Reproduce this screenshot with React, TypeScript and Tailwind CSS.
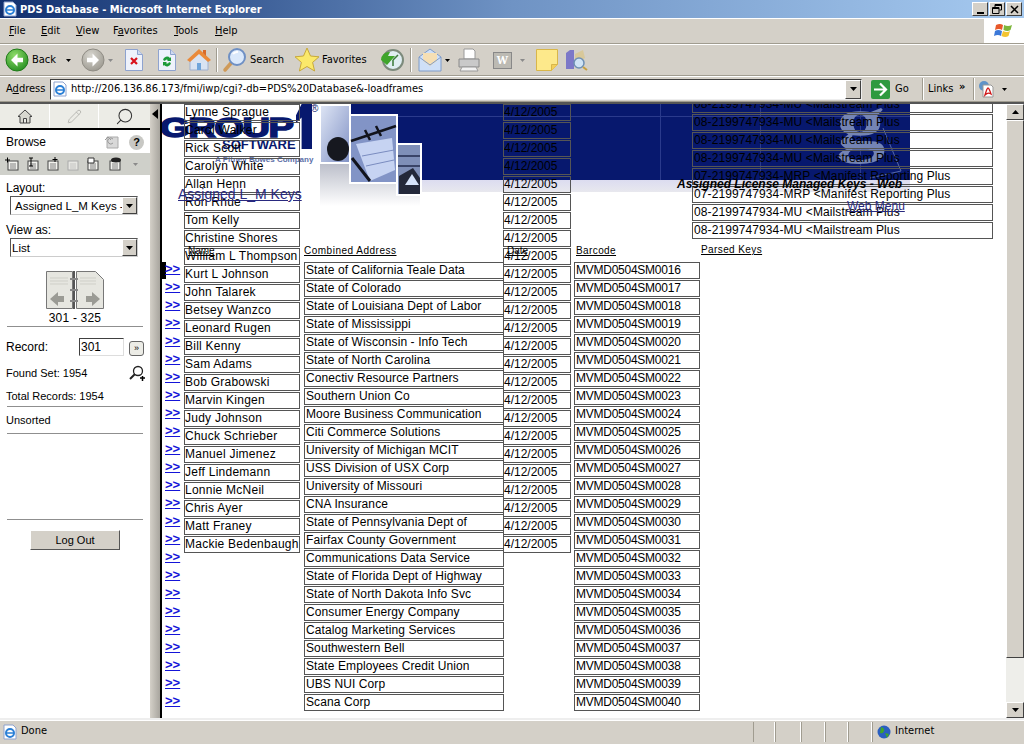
import type { ReactNode } from 'react';
import { Search, Pencil } from 'lucide-react';

const NAMES = [
  'Lynne Sprague', 'Carol Walker', 'Rick Scott', 'Carolyn White', 'Allan Henn', 'Ron Rhue', 'Tom Kelly',
  'Christine Shores', 'William L Thompson', 'Kurt L Johnson', 'John Talarek', 'Betsey Wanzco', 'Leonard Rugen',
  'Bill Kenny', 'Sam Adams', 'Bob Grabowski', 'Marvin Kingen', 'Judy Johnson', 'Chuck Schrieber', 'Manuel Jimenez',
  'Jeff Lindemann', 'Lonnie McNeil', 'Chris Ayer', 'Matt Franey', 'Mackie Bedenbaugh',
];

const ADDRESSES = [
  'State of California Teale Data', 'State of Colorado', 'State of Louisiana Dept of Labor', 'State of Mississippi',
  'State of Wisconsin - Info Tech', 'State of North Carolina', 'Conectiv Resource Partners', 'Southern Union Co',
  'Moore Business Communication', 'Citi Commerce Solutions', 'University of Michigan MCIT', 'USS Division of USX Corp',
  'University of Missouri', 'CNA Insurance', 'State of Pennsylvania Dept of', 'Fairfax County Government',
  'Communications Data Service', 'State of Florida Dept of Highway', 'State of North Dakota Info Svc',
  'Consumer Energy Company', 'Catalog Marketing Services', 'Southwestern Bell', 'State Employees Credit Union',
  'UBS NUI Corp', 'Scana Corp',
];

const KEYS = [
  '08-2199747934-MU <Mailstream Plus', '08-2199747934-MU <Mailstream Plus', '08-2199747934-MU <Mailstream Plus',
  '08-2199747934-MU <Mailstream Plus', '07-2199747934-MRP <Manifest Reporting Plus',
  '07-2199747934-MRP <Manifest Reporting Plus', '08-2199747934-MU <Mailstream Plus', '08-2199747934-MU <Mailstream Plus',
];

const BARCODES = Array.from({ length: 25 }, (_, i) => `MVMD0504SM00${16 + i}`);
const DATES = Array.from({ length: 25 }, () => '4/12/2005');

function Cell({ children, spacing = 'tracking-[0.1px] px-px' }: { children: ReactNode; spacing?: string }) {
  return (
    <div className={`mb-px h-[17px] overflow-hidden whitespace-nowrap border border-[#555] text-[12px] leading-[15px] text-black ${spacing}`}>
      {children}
    </div>
  );
}

function MenuItem({ k, rest }: { k: string; rest: string }) {
  return (
    <span>
      <span className="underline">{k}</span>
      {rest}
    </span>
  );
}

function Sep() {
  return <div className="mx-[3px] h-[24px] w-[2px] border-x border-l-[#a09c90] border-r-white" />;
}

function Arrow({ color = '#000' }: { color?: string }) {
  return (
    <svg width="5" height="3" viewBox="0 0 5 3" className="mx-[3px]">
      <path d="M0 0h5L2.500 3z" fill={color} />
    </svg>
  );
}

function RoundArrow({ back, gray }: { back?: boolean; gray?: boolean }) {
  const id = gray ? 'fwd' : 'bck';
  return (
    <svg width="24" height="24" viewBox="0 0 24 24">
      <defs>
        <radialGradient id={id} cx="0.4" cy="0.3" r="0.8">
          <stop offset="0" stopColor={gray ? '#d8d6cf' : '#8fdc6a'} />
          <stop offset="1" stopColor={gray ? '#98958c' : '#1f8a1c'} />
        </radialGradient>
      </defs>
      <circle cx="12" cy="12" r="11" fill={`url(#${id})`} stroke={gray ? '#8f8c84' : '#1f7a18'} />
      <path
        d={back ? 'M12.500 5.500 6 12l6.500 6.500v-4.200H18V9.700h-5.500z' : 'M11.500 5.500 18 12l-6.500 6.500v-4.200H6V9.700h5.500z'}
        fill="#fff"
      />
    </svg>
  );
}

function PageIcon({ children }: { children: ReactNode }) {
  return (
    <svg width="20" height="24" viewBox="0 0 20 24" className="mx-[3px]">
      <path d="M1.500 1.500h12l5 5v16h-17z" fill="#eef2fb" stroke="#8ea3cf" />
      <path d="M13.500 1.500v5h5" fill="#cfd9ef" stroke="#8ea3cf" />
      {children}
    </svg>
  );
}

function IeIcon({ size = 16 }: { size?: number }) {
  return (
    <svg width={size} height={size} viewBox="0 0 16 16">
      <path d="M2 1h9l3 3v11H2z" fill="#fff" stroke="#8ea3cf" />
      <circle cx="8" cy="9" r="4" fill="none" stroke="#2a7fd6" strokeWidth="2" />
      <path d="M4 9h8" stroke="#2a7fd6" strokeWidth="1.500" />
    </svg>
  );
}

function TitleBar() {
  return (
    <div className="flex h-[18px] items-center bg-gradient-to-r from-[#12306f] via-[#6f93c4] to-[#a6caf0] pl-[2px] pr-[2px]">
      <IeIcon />
      <span className="ml-[2px] flex-1 font-['DejaVu_Sans_Condensed','Noto_Sans',sans-serif] text-[11px] font-bold leading-none text-white">
        PDS Database - Microsoft Internet Explorer
      </span>
      <div className="flex gap-[1px]">
        {[0, 1, 2].map(i => (
          <div
            key={i}
            className="flex h-[14px] w-[16px] items-center justify-center border border-t-white border-l-white border-r-[#404040] border-b-[#404040] bg-[#d4d0c8]"
          >
            {i === 1 ? (
              <svg width="10" height="10" viewBox="0 0 10 10">
                <path d="M3 .5h6.500V6H7.500M3 .5V3M3 1.500h6.500" fill="none" stroke="#000" />
                <path d="M.5 3.500h6.500v6H.5zM.5 4.500h6.500" fill="none" stroke="#000" />
              </svg>
            ) : i === 0 ? (
              <div className="mt-[8px] h-[2px] w-[7px] bg-black" />
            ) : (
              <svg width="9" height="9" viewBox="0 0 9 9">
                <path d="M1 1l7 7M8 1 1 8" stroke="#000" strokeWidth="1.500" />
              </svg>
            )}
          </div>
        ))}
      </div>
    </div>
  );
}

function MenuBar() {
  return (
    <div className="flex h-[26px] items-center justify-between border-y border-t-white border-b-[#a09c90] font-['DejaVu_Sans_Condensed','Noto_Sans',sans-serif] text-[11px]">
      <div className="flex pl-[9px]">
        <span className="w-[32px]"><MenuItem k="F" rest="ile" /></span>
        <span className="w-[35px]"><MenuItem k="E" rest="dit" /></span>
        <span className="w-[37px]"><MenuItem k="V" rest="iew" /></span>
        <span className="w-[61px]">F<span className="underline">a</span>vorites</span>
        <span className="w-[41px]"><MenuItem k="T" rest="ools" /></span>
        <MenuItem k="H" rest="elp" />
      </div>
      <div className="flex h-full w-[40px] items-center justify-center bg-white">
        <svg width="20" height="18" viewBox="0 0 20 18">
          <path d="M2 3q4-2 7 0l-1 5q-3-2-7 0z" fill="#e8582a" />
          <path d="M10 3q4 2 8 0l-1.500 5q-3 2-7 0z" fill="#7db63a" />
          <path d="M1 9q3-2 7 0l-1 5q-3-2-7 0z" fill="#3b78d8" />
          <path d="M9 9q4 2 7 0l-1.500 5q-3 2-7 0z" fill="#f4c430" />
        </svg>
      </div>
    </div>
  );
}

function Toolbar() {
  return (
    <div className="flex h-[32px] items-center whitespace-nowrap border-y border-t-white border-b-[#a09c90] pl-[5px] font-['DejaVu_Sans_Condensed','Noto_Sans',sans-serif] text-[11px]">
      <RoundArrow back />
      <span className="ml-[3px] w-[31px]">Back</span>
      <Arrow />
      <span className="ml-[7px] flex"><RoundArrow gray /></span>
      <span className="flex"><Arrow color="#8a8a8a" /></span>
      <span className="ml-[5px] flex">
        <PageIcon>
          <path d="M7 10l6 6M13 10l-6 6" stroke="#d8121c" strokeWidth="2.200" />
        </PageIcon>
      </span>
      <span className="ml-[7px] flex">
        <PageIcon>
          <path d="M6 12a4 4 0 0 1 7-2l1-1v4h-4l1-1a2 2 0 0 0-3 1zM14 15a4 4 0 0 1-7 2l-1 1v-4h4l-1 1a2 2 0 0 0 3-1z" fill="#1d9a38" />
        </PageIcon>
      </span>
      <svg width="24" height="24" viewBox="0 0 24 24" className="ml-[7px]">
        <path d="M12 3 3 12v10h18V12z" fill="#d9e3f2" stroke="#9fb0cf" />
        <path d="M12 1 0 12l3 2 9-8 9 8 3-2z" fill="#ea8a3a" />
        <path d="M10 15h4v7h-4z" fill="#6fa4da" />
        <path d="M16 2h3v6l-3-3z" fill="#d96a2a" />
      </svg>
      <span className="ml-[2px] flex"><Sep /></span>
      <svg width="26" height="26" viewBox="0 0 26 26" className="ml-[1px]">
        <path d="M10 15 3 23" stroke="#cf9a58" strokeWidth="3.500" strokeLinecap="round" />
        <circle cx="15" cy="10" r="8" fill="#dbe9fb" stroke="#6f90c4" strokeWidth="2" />
        <path d="M11 7a5 5 0 0 1 5-2" stroke="#fff" strokeWidth="2" fill="none" />
      </svg>
      <span className="ml-[2px] w-[34px]">Search</span>
      <svg width="26" height="26" viewBox="0 0 26 26" className="ml-[10px]">
        <path d="M13 1l3.500 8 8.500.8-6.400 5.600 2 8.600L13 19.500 5.400 24l2-8.600L1 9.800 9.500 9z" fill="#fbe96a" stroke="#c8a93a" />
      </svg>
      <span className="ml-[2px] w-[46px]">Favorites</span>
      <svg width="24" height="24" viewBox="0 0 24 24" className="ml-[12px]">
        <circle cx="13" cy="12" r="10" fill="#dfeef2" stroke="#7c8a7c" strokeWidth="2" />
        <path d="M13 12l5-5M13 12v6" stroke="#3a7a3a" strokeWidth="1.500" />
        <path d="M1 12a8 8 0 0 1 9-8l-2 4h7l-8 9z" fill="#3fa52c" />
      </svg>
      <span className="ml-[3px] flex"><Sep /></span>
      <svg width="24" height="24" viewBox="0 0 24 24" className="ml-[3px]">
        <path d="M1 9 12 1l11 8v14H1z" fill="#cfe0f8" stroke="#7f9cc9" />
        <path d="M5 5h14v8l-7 5-7-5z" fill="#f6dfb4" />
        <path d="M1 9l11 8 11-8" fill="none" stroke="#7f9cc9" />
      </svg>
      <Arrow />
      <svg width="24" height="24" viewBox="0 0 24 24" className="ml-[4px]">
        <path d="M7 1h9l2 2v8H7z" fill="#fff" stroke="#9a9a9a" />
        <path d="M2 11h20v8H2z" fill="#c9c9c9" stroke="#8a8a8a" />
        <path d="M5 19h14l2 4H3z" fill="#f2f2f2" stroke="#9a9a9a" />
      </svg>
      <div className="ml-[12px] flex h-[17px] w-[19px] items-center justify-center border border-[#888] bg-[#bcbab3] font-serif text-[12px] font-bold leading-none text-white">
        W
      </div>
      <span className="ml-[5px] flex"><Arrow color="#8a8a8a" /></span>
      <svg width="24" height="24" viewBox="0 0 24 24" className="ml-[7px]">
        <path d="M1.500 1.500h21v15l-6 6h-15z" fill="#fde98b" stroke="#d8b64a" />
        <path d="M16.500 22.500v-6h6" fill="#f4cf5a" stroke="#d8b64a" />
      </svg>
      <svg width="24" height="24" viewBox="0 0 24 24" className="ml-[6px]">
        <path d="M1 5l4-3h4v19H1z" fill="#7c78c8" />
        <path d="M10 6l8-4 2 8-10 6z" fill="#d8c89a" />
        <circle cx="14" cy="15" r="5" fill="#cfe3f5" stroke="#6f90b4" strokeWidth="1.500" />
        <path d="M18 19l4 3" stroke="#c8a040" strokeWidth="2" />
      </svg>
    </div>
  );
}

function AddressBar() {
  return (
    <div className="flex h-[26px] items-center whitespace-nowrap border-y border-t-white border-b-[#a09c90] font-['DejaVu_Sans_Condensed','Noto_Sans',sans-serif] text-[11px]">
      <span className="ml-[6px] w-[44px]">A<span className="underline">d</span>dress</span>
      <div className="flex h-[21px] w-[812px] items-center border border-t-[#404040] border-l-[#404040] border-r-[#eee] border-b-[#eee] bg-white">
        <span className="ml-[1px] flex"><IeIcon /></span>
        <span className="ml-[3px] flex-1 text-black">http://206.136.86.173/fmi/iwp/cgi?-db=PDS%20Database&amp;-loadframes</span>
        <div className="flex h-[19px] w-[16px] items-center justify-center border border-t-white border-l-white border-r-[#404040] border-b-[#404040] bg-[#d4d0c8]">
          <svg width="7" height="4" viewBox="0 0 7 4"><path d="M0 0h7L3.500 4z" /></svg>
        </div>
      </div>
      <svg width="19" height="19" viewBox="0 0 19 19" className="ml-[9px]">
        <rect width="19" height="19" rx="2" fill="#2f9a3f" />
        <path d="M9 3.500 15 9.500 9 15.500M3 9.500h11" fill="none" stroke="#fff" strokeWidth="2.200" />
      </svg>
      <span className="ml-[5px] w-[27px]">Go</span>
      <div className="h-[22px] w-[2px] border-x border-l-[#a09c90] border-r-white" />
      <span className="ml-[4px] w-[31px]">Links</span>
      <span className="mb-[5px] w-[14px] text-[11px] font-bold leading-none">»</span>
      <div className="h-[22px] w-[2px] border-x border-l-[#a09c90] border-r-white" />
      <svg width="17" height="18" viewBox="0 0 17 18" className="ml-[3px]">
        <circle cx="6" cy="6" r="5" fill="#5f93c8" />
        <path d="M5 5h8l2 2v10H5z" fill="#fff" stroke="#999" />
        <path d="M7 15q2-7 3-7t3 6q-3-2-6 1z" fill="none" stroke="#d01818" strokeWidth="1.300" />
      </svg>
      <span className="ml-[4px] flex"><Arrow /></span>
    </div>
  );
}

function Divider() {
  return <div className="mx-[7px] h-px bg-[#8f8f8f]" />;
}

function Select({ value, narrow }: { value: string; narrow?: boolean }) {
  return (
    <div className="ml-[10px] flex h-[19px] w-[128px] items-center border border-t-[#555] border-l-[#555] border-r-[#ccc] border-b-[#ccc] bg-white">
      <span className={`flex-1 overflow-hidden whitespace-nowrap text-[11.5px] leading-[16px] ${narrow ? 'pl-[1px]' : 'pl-[4px]'}`}>{value}</span>
      <div className="flex h-[17px] w-[15px] shrink-0 items-center justify-center border border-t-white border-l-white border-r-[#404040] border-b-[#404040] bg-[#d4d0c8]">
        <svg width="7" height="4" viewBox="0 0 7 4"><path d="M0 0h7L3.500 4z" /></svg>
      </div>
    </div>
  );
}

function Sidebar() {
  return (
    <div className="flex w-[150px] shrink-0 flex-col bg-white text-[12px] text-black">
      <div className="flex h-[26px] shrink-0 border-b-[2px] border-b-black bg-[#ecece6]">
        <div className="flex w-[50px] items-center justify-center border-r border-r-white">
          <svg width="16" height="15" viewBox="0 0 16 15">
            <path d="M8 1 1 7.500h2V14h10V7.500h2zM6.500 14V9.500h3V14" fill="#d8d8d0" stroke="#444" />
          </svg>
        </div>
        <div className="flex w-[49px] items-center justify-center border-r border-r-white text-[#b5b5b0]">
          <Pencil size={15} strokeWidth={1.500} />
        </div>
        <div className="flex flex-1 items-center justify-center text-[#333]">
          <Search size={19} strokeWidth={1.300} className="-scale-x-100" />
        </div>
      </div>
      <div className="flex h-[23px] shrink-0 items-center pl-[6px] pt-[1px]">
        <span className="flex-1">Browse</span>
        <svg width="17" height="15" viewBox="0 0 17 15" className="mr-[8px]">
          <path d="M3 2h11v11H3z" fill="#d8d8d8" stroke="#aaa" />
          <path d="M1 5l3-3 3 3M9 8a3 3 0 1 1 0-4" fill="none" stroke="#999" />
        </svg>
        <div className="mr-[6px] flex h-[15px] w-[15px] items-center justify-center rounded-full bg-[#c8c8c4] text-[11px] font-bold leading-none">?</div>
      </div>
      <div className="flex h-[22px] shrink-0 items-center gap-[5px] bg-[#cfd0ca] pl-[5px]">
        {[0, 1, 2, 3, 4, 5].map(i => (
          <svg key={i} width={i === 5 ? 19 : 15} height="15" viewBox="0 0 15 15">
            <rect x="3" y="4" width="10" height="9" fill={i === 3 ? '#e6e6e2' : '#f2f2ee'} stroke={i === 3 ? '#aaa' : '#444'} />
            <path d="M5 7h6M5 9h6M5 11h6" stroke={i === 3 ? '#bbb' : '#666'} strokeWidth=".8" />
            {i === 0 && <path d="M0 3h5M2.500 .5v5" stroke="#000" />}
            {i === 1 && <path d="M4 1h4M6 1v8M4 9h4" stroke="#000" />}
            {i === 2 && <path d="M10 0v5M7.500 2.500h5" stroke="#000" />}
            {i === 4 && <path d="M3 1h6v5H3z" fill="#fff" stroke="#333" />}
            {i === 5 && <ellipse cx="9" cy="3" rx="5" ry="2.500" fill="#222" />}
          </svg>
        ))}
        <span className="ml-[1px]"><Arrow color="#8a8a8a" /></span>
      </div>
      <div className="mt-[6px] pl-[6px] leading-[14px]">Layout:</div>
      <div className="mt-[1px]"><Select value="Assigned L_M Keys -" /></div>
      <div className="mt-[8px] pl-[6px] leading-[14px]">View as:</div>
      <div className="mt-[1px]"><Select value="List" narrow /></div>
      <div className="mt-[14px] flex justify-center">
        <svg width="58" height="38" viewBox="0 0 58 38">
          <path d="M.5.500h26v37H.5zM30.500.500h19l8 8v29h-27z" fill="#e6e6e0" stroke="#777" />
          <path d="M4 7h18M4 10h18M4 13h18M34 7h16M34 10h16M34 13h16" stroke="#cfcfc8" />
          <path d="M4 28l8-7v4h6v6h-6v4zM54 28l-8-7v4h-6v6h6v4z" fill="#9b9b95" />
          <path d="M28 0v38" stroke="#555" strokeWidth="2" />
          <path d="M24 8h8M24 19h8M24 30h8" stroke="#888" strokeWidth="2" />
        </svg>
      </div>
      <div className="mt-[1px] text-center leading-[16px] tracking-[0.2px]">301 - 325</div>
      <Divider />
      <div className="mt-[10px] flex h-[20px] items-center pl-[6px]">
        <span className="w-[73px]">Record:</span>
        <div className="h-[18px] w-[45px] border border-t-[#404040] border-l-[#404040] border-r-[#ddd] border-b-[#ddd] pl-[1px] leading-[16px]">301</div>
        <div className="ml-[5px] mt-[3px] flex h-[15px] w-[15px] items-center justify-center rounded-[3px] border border-[#666] bg-[#ecece6] text-[9px] leading-none">»</div>
      </div>
      <div className="mt-[8px] flex h-[16px] items-center pl-[6px] text-[11px]">
        <span className="flex-1">Found Set: 1954</span>
        <svg width="16" height="16" viewBox="0 0 16 16" className="mr-[5px]">
          <circle cx="9" cy="6" r="4.500" fill="#fff" stroke="#222" strokeWidth="1.300" />
          <path d="M6 9 1 14" stroke="#222" strokeWidth="2" />
          <path d="M11 13h5M13.500 11v5" stroke="#000" strokeWidth="1.500" />
        </svg>
      </div>
      <div className="mt-[7px] pl-[6px] text-[11px] leading-[16px]">Total Records: 1954</div>
      <div className="mt-[2px]"><Divider /></div>
      <div className="mt-[5px] pl-[6px] text-[11px] leading-[16px]">Unsorted</div>
      <div className="mt-[5px]"><Divider /></div>
      <div className="mt-[85px]"><Divider /></div>
      <button className="mx-auto mt-[10px] h-[20px] w-[90px] border border-t-white border-l-white border-r-[#555] border-b-[#555] bg-[#d4d0c8] text-[11px] leading-none">
        Log Out
      </button>
    </div>
  );
}

// Banner image sits under the data rows: the page really does overlap them.
function Banner() {
  return (
    <div className="absolute left-[3px] top-0 h-[102px] w-[750px]">
      <div className="absolute left-[185px] top-0 h-[76px] w-[560px] bg-[#07186e]" />
      <div className="absolute left-[185px] top-[12px] h-px w-[560px] bg-[#2a3a8c]" />
      <div className="absolute left-[495px] top-0 h-[76px] w-px bg-[#2a3a8c]" />
      <div className="absolute left-[595px] top-0 h-[76px] w-px bg-[#2a3a8c]" />
      <div className="absolute left-[695px] top-0 h-[76px] w-px bg-[#2a3a8c]" />
      <div className="absolute left-[230px] top-[76px] h-[12px] w-[515px] bg-gradient-to-b from-[#dcdcf0] to-[#e8e8ee]" />

      <svg width="102" height="102" viewBox="0 0 102 102" className="absolute left-[155px] top-0">
        <defs>
          <linearGradient id="photo" x1="0" y1="0" x2="1" y2="1">
            <stop offset="0" stopColor="#dfe6f5" />
            <stop offset="1" stopColor="#7f90c4" />
          </linearGradient>
          <linearGradient id="fade" x1="0" y1="0" x2="0" y2="1">
            <stop offset="0" stopColor="#b9bcc8" />
            <stop offset="1" stopColor="#ffffff" />
          </linearGradient>
        </defs>
        <rect x="0" y="58" width="100" height="44" fill="url(#fade)" />
        <rect x="0" y="1" width="30" height="58" fill="url(#photo)" stroke="#fff" strokeWidth="2" />
        <ellipse cx="18" cy="45" rx="11" ry="12" fill="#16181f" />
        <rect x="30" y="11" width="47" height="68" fill="#8294c6" stroke="#fff" strokeWidth="2" />
        <path d="M36 40 72 34 75 66 50 77z" fill="#c6d3f2" />
        <path d="M42 52l32-6M46 62l28-6" stroke="#7a8cc0" />
        <path d="M31 37 76 22M45 26l5 10M56 22l5 10" stroke="#11131c" strokeWidth="2.500" fill="none" />
        <path d="M32 54 50 77" stroke="#11131c" strokeWidth="3" />
        <rect x="77" y="40" width="24" height="51" fill="#7f8fb8" stroke="#fff" strokeWidth="2" />
        <path d="M78 62h22M78 52h22" stroke="#3a4468" strokeWidth="2" />
        <path d="M79 90V72l14-8 7 10v16z" fill="#23283a" />
        <path d="M92 70l7 11H85z" fill="#d5e2fa" />
      </svg>

      <div className="absolute left-[671px] top-[-20px] origin-left scale-x-[1.3] font-['Liberation_Serif',serif] text-[76px] font-bold leading-none text-[#7484b4]">g</div>
      <svg width="60" height="62" viewBox="0 0 60 62" className="absolute left-[685px] top-[16px]">
        <path d="M33 8 51 51 20 58" fill="none" stroke="#5668a8" />
      </svg>

      <div className="absolute left-[-5px] top-[11px] origin-left scale-x-[1.41] font-['Liberation_Sans',sans-serif] text-[27px] font-black leading-none tracking-[-1px] text-[#07186e] [-webkit-text-stroke:1.5px_#07186e]">
        GROUP
      </div>
      <div className="absolute left-[131px] top-0 h-[45px] w-[16px] bg-[#07186e] [clip-path:polygon(35%_0,100%_0,100%_100%,35%_100%,35%_30%,0_42%,0_25%)]" />
      <div className="absolute left-[57px] top-[34px] font-['Liberation_Sans',sans-serif] text-[13px] font-bold leading-none text-[#07186e]">SOFTWARE</div>
      <div className="absolute left-[50px] top-[52px] whitespace-nowrap font-['Liberation_Sans',sans-serif] text-[8px] font-bold leading-none text-[#5c6fa8]">A Pitney Bowes Company</div>
      <div className="absolute left-[146px] top-0 text-[10px] leading-none text-[#07186e]">®</div>
    </div>
  );
}

function Canvas() {
  return (
    <div className="relative flex-1 overflow-hidden bg-white font-['Liberation_Sans',sans-serif]">
      <Banner />
      <div className="absolute left-[22px] top-0 w-[116px]">
        {NAMES.map(n => <Cell key={n} spacing="tracking-[0.25px]">{n}</Cell>)}
      </div>
      <div className="absolute left-[341px] top-0 w-[68px]">
        {DATES.map((d, i) => <Cell key={i} spacing="tracking-normal">{d}</Cell>)}
      </div>
      <div className="absolute left-[142px] top-[158px] w-[200px]">
        {ADDRESSES.map(a => <Cell key={a}>{a}</Cell>)}
      </div>
      <div className="absolute left-[412px] top-[158px] w-[126px]">
        {BARCODES.map(b => <Cell key={b} spacing="tracking-[-0.25px] px-px">{b}</Cell>)}
      </div>
      <div className="absolute left-[530px] top-[-8px] w-[301px]">
        {KEYS.map((k, i) => <Cell key={i}>{k}</Cell>)}
      </div>

      <div className="absolute left-[26px] top-[142px] text-[10px] leading-none text-black underline">Name</div>
      <div className="absolute left-[142px] top-[142px] text-[10px] leading-none tracking-[0.5px] text-black underline">Combined Address</div>
      <div className="absolute left-[345px] top-[142px] text-[10px] leading-none text-black underline">Date</div>
      <div className="absolute left-[414px] top-[142px] text-[10px] leading-none tracking-[0.4px] text-black underline">Barcode</div>
      <div className="absolute left-[539px] top-[141px] text-[10px] leading-none tracking-[0.4px] text-black underline">Parsed Keys</div>
      <div className="absolute left-[16px] top-[83px] text-[14px] leading-none text-[#29297f] underline">Assigned L_M Keys</div>
      <div className="absolute left-[515px] top-[74px] whitespace-nowrap text-[12px] font-bold italic leading-none text-black">Assigned License Managed Keys - Web</div>
      <div className="absolute left-[685px] top-[96px] text-[12px] leading-none text-[#29297f] underline">Web Menu</div>

      <div className="absolute left-0 top-[158px] h-[17px] w-[4px] bg-black" />
      <div className="absolute left-[3px] top-[157px]">
        {Array.from({ length: 25 }, (_, i) => (
          <div key={i} className="h-[18px] w-[20px] text-[13px] font-bold leading-[16px] text-[#1414d8] underline">
            &gt;&gt;
          </div>
        ))}
      </div>
    </div>
  );
}

function Scrollbar() {
  return (
    <div className="flex w-[18px] shrink-0 flex-col bg-[#eeeeea] [background-image:radial-gradient(#c8c8c4_0.5px,transparent_0.5px)] [background-size:2px_2px]">
      <div className="flex h-[16px] shrink-0 items-center justify-center border border-t-white border-l-white border-r-[#404040] border-b-[#404040] bg-[#d4d0c8]">
        <svg width="7" height="4" viewBox="0 0 7 4"><path d="M0 4h7L3.500 0z" /></svg>
      </div>
      <div className="h-[538px] shrink-0 border border-t-white border-l-white border-r-[#404040] border-b-[#404040] bg-[#d4d0c8]" />
      <div className="flex-1" />
      <div className="flex h-[16px] shrink-0 items-center justify-center border border-t-white border-l-white border-r-[#404040] border-b-[#404040] bg-[#d4d0c8]">
        <svg width="7" height="4" viewBox="0 0 7 4"><path d="M0 0h7L3.500 4z" /></svg>
      </div>
    </div>
  );
}

function StatusBar() {
  return (
    <div className="flex h-[24px] items-center border-t border-t-white bg-[#d4d0c8] pb-[2px] font-['DejaVu_Sans_Condensed','Noto_Sans',sans-serif] text-[11px]">
      <span className="ml-[2px] flex"><IeIcon /></span>
      <span className="ml-[3px] flex-1">Done</span>
      {[22, 26, 24, 23, 24].map((w, i) => (
        <div key={i} className="h-[20px] border-l border-l-[#a09c90] border-r border-r-white" style={{ width: w }} />
      ))}
      <div className="flex h-[20px] w-[152px] items-center border-l border-l-[#a09c90] pl-[4px]">
        <svg width="14" height="16" viewBox="0 0 14 16">
          <circle cx="7" cy="8" r="6.500" fill="#2a5fc0" />
          <path d="M4 3q4 1 3 4T3 9zM8 9l4 1-2 4z" fill="#3fa52c" />
        </svg>
        <span className="ml-[4px]">Internet</span>
      </div>
    </div>
  );
}

export default function App() {
  return (
    <div className="flex h-[744px] w-[1024px] flex-col overflow-hidden bg-[#d4d0c8] font-['Liberation_Sans',sans-serif] text-black">
      <TitleBar />
      <MenuBar />
      <Toolbar />
      <AddressBar />
      <div className="flex h-[618px] shrink-0 border-y-2 border-t-[#555] border-b-[#eee] bg-white">
        <Sidebar />
        <div className="flex w-[12px] shrink-0 justify-center border-r-2 border-r-black bg-gradient-to-r from-[#d4d0c8] to-[#a8a59e] pt-[5px]">
          <svg width="6" height="10" viewBox="0 0 6 10"><path d="M6 0v10L0 5z" /></svg>
        </div>
        <Canvas />
        <Scrollbar />
      </div>
      <StatusBar />
    </div>
  );
}
